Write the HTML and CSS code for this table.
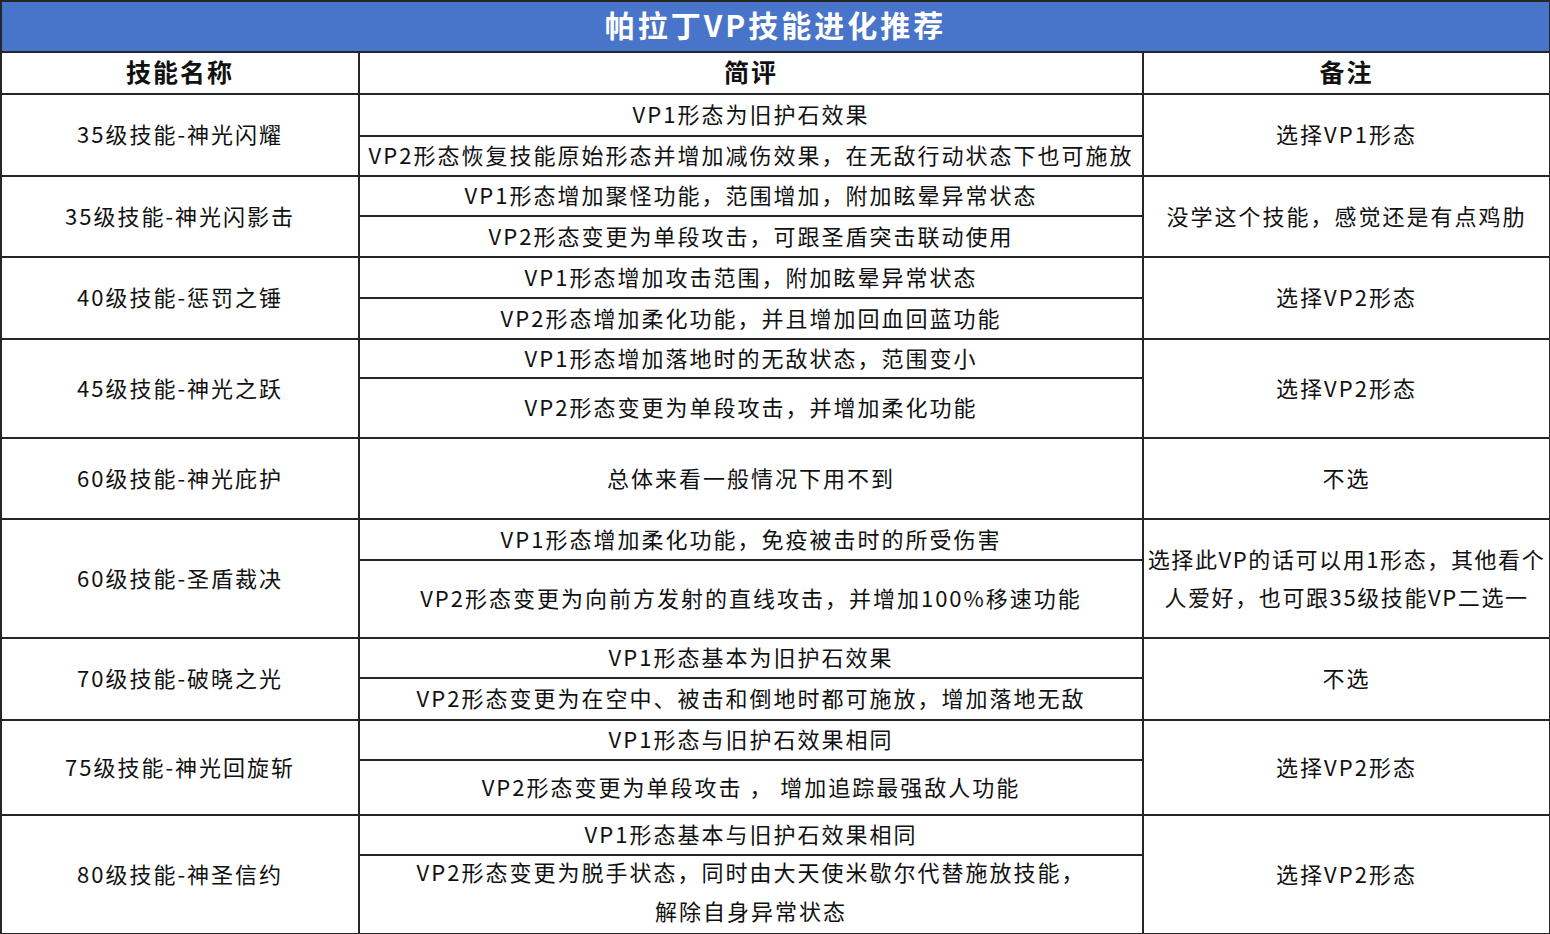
FILE: index.html
```html
<!DOCTYPE html>
<html lang="zh-CN">
<head>
<meta charset="utf-8">
<title>帕拉丁VP技能进化推荐</title>
<link rel="stylesheet" href="styles.css">
</head>
<body>
<table class="vp-table">
  <colgroup>
    <col class="col-name">
    <col class="col-review">
    <col class="col-note">
  </colgroup>
  <thead>
    <tr class="r-title"><th colspan="3" class="title">帕拉丁VP技能进化推荐</th></tr>
    <tr class="r-head"><th>技能名称</th><th>简评</th><th>备注</th></tr>
  </thead>
  <tbody>
    <tr class="h42"><td rowspan="2">35级技能-神光闪耀</td><td>VP1形态为旧护石效果</td><td rowspan="2">选择VP1形态</td></tr>
    <tr class="h40"><td>VP2形态恢复技能原始形态并增加减伤效果，在无敌行动状态下也可施放</td></tr>

    <tr class="h40"><td rowspan="2">35级技能-神光闪影击</td><td>VP1形态增加聚怪功能，范围增加，附加眩晕异常状态</td><td rowspan="2">没学这个技能，感觉还是有点鸡肋</td></tr>
    <tr class="h41"><td>VP2形态变更为单段攻击，可跟圣盾突击联动使用</td></tr>

    <tr class="h41"><td rowspan="2">40级技能-惩罚之锤</td><td>VP1形态增加攻击范围，附加眩晕异常状态</td><td rowspan="2">选择VP2形态</td></tr>
    <tr class="h41"><td>VP2形态增加柔化功能，并且增加回血回蓝功能</td></tr>

    <tr class="h39"><td rowspan="2">45级技能-神光之跃</td><td>VP1形态增加落地时的无敌状态，范围变小</td><td rowspan="2">选择VP2形态</td></tr>
    <tr class="h60"><td>VP2形态变更为单段攻击，并增加柔化功能</td></tr>

    <tr class="h81"><td>60级技能-神光庇护</td><td>总体来看一般情况下用不到</td><td>不选</td></tr>

    <tr class="h41"><td rowspan="2">60级技能-圣盾裁决</td><td>VP1形态增加柔化功能，免疫被击时的所受伤害</td><td rowspan="2" class="multi tight">选择此VP的话可以用1形态，其他看个<br>人爱好，也可跟35级技能VP二选一</td></tr>
    <tr class="h78"><td>VP2形态变更为向前方发射的直线攻击，并增加100%移速功能</td></tr>

    <tr class="h40"><td rowspan="2">70级技能-破晓之光</td><td>VP1形态基本为旧护石效果</td><td rowspan="2">不选</td></tr>
    <tr class="h42"><td>VP2形态变更为在空中、被击和倒地时都可施放，增加落地无敌</td></tr>

    <tr class="h40"><td rowspan="2">75级技能-神光回旋斩</td><td>VP1形态与旧护石效果相同</td><td rowspan="2">选择VP2形态</td></tr>
    <tr class="h55"><td>VP2形态变更为单段攻击 ， 增加追踪最强敌人功能</td></tr>

    <tr class="h40"><td rowspan="2">80级技能-神圣信约</td><td>VP1形态基本与旧护石效果相同</td><td rowspan="2">选择VP2形态</td></tr>
    <tr class="h78"><td class="multi"><div class="raised">VP2形态变更为脱手状态，同时由大天使米歇尔代替施放技能，<br>解除自身异常状态</div></td></tr>
  </tbody>
</table>
</body>
</html>
```

FILE: styles.css
```css
html, body {
  margin: 0;
  padding: 0;
  background: #ffffff;
}

body {
  font-family: "Noto Sans CJK SC", "Noto Sans", sans-serif;
  color: #111111;
}

.vp-table {
  width: 1549px;
  border-collapse: collapse;
  table-layout: fixed;
}

.col-name { width: 358px; }
.col-review { width: 784px; }
.col-note { width: 407px; }

.vp-table th,
.vp-table td {
  border: 2px solid #262626;
  padding: 0 0 4px 0;
  text-align: center;
  vertical-align: middle;
  white-space: nowrap;
  font-size: 22px;
  letter-spacing: 2px;
  line-height: 30px;
}

.vp-table th {
  font-weight: 700;
  font-size: 25px;
}

.vp-table .title {
  background: #4874c9;
  color: #ffffff;
  font-size: 30px;
  letter-spacing: 3px;
  line-height: 34px;
  padding-bottom: 5px;
}

.vp-table td.multi {
  line-height: 38px;
  padding-bottom: 3px;
}

.vp-table td.tight {
  letter-spacing: 1.6px;
}

.raised {
  line-height: 39px;
  margin-top: -4px;
}

.r-title { height: 51px; }
.r-head { height: 42px; }
.h39 { height: 39px; }
.h40 { height: 40px; }
.h41 { height: 41px; }
.h42 { height: 42px; }
.h55 { height: 55px; }
.h60 { height: 60px; }
.h78 { height: 78px; }
.h81 { height: 81px; }
```
